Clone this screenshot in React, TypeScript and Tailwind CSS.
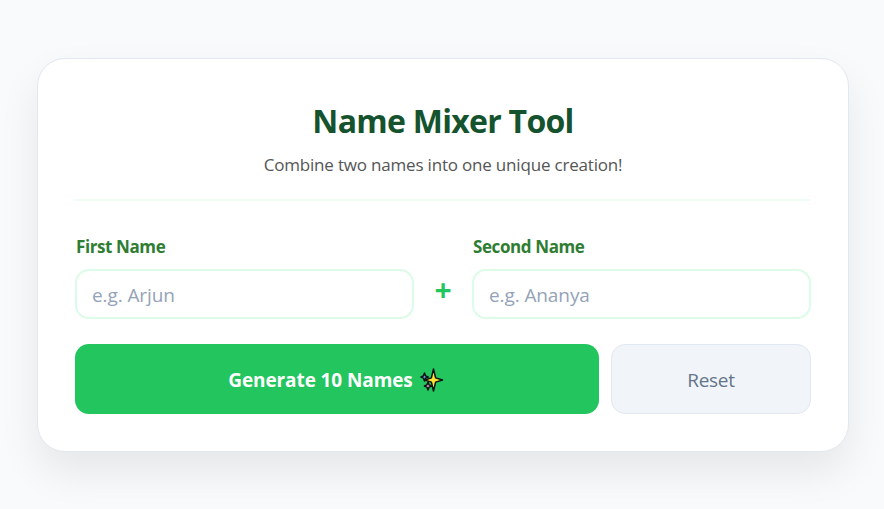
export default function App() {
  return (
    <div className="min-h-[509px] h-[509px] overflow-hidden bg-[#f8fafc] flex pl-[37px] pt-[58px] font-['Open_Sans',sans-serif]">
      <div className="w-[812px] h-[394px] bg-white border border-[#e2e8f0] rounded-[28px] px-[37px] pt-[40px] shadow-[0_20px_40px_rgba(0,0,0,0.08)]">
        <div className="border-b-2 border-[#f0fdf4] h-[102px] text-center">
          <h1 className="text-[32px] leading-[44px] font-bold text-[#14532d] tracking-[-0.72px]">Name Mixer Tool</h1>
          <p className="mt-[10px] text-[17px] leading-[24px] text-[#555555] tracking-[-0.19px]">Combine two names into one unique creation!</p>
        </div>

        <div className="flex items-end mt-[34px]">
          <div className="w-[339px]">
            <label className="block text-[17px] leading-[24px] font-bold text-[#2e7d32] mb-[10px] pl-px tracking-[-0.4px]">First Name</label>
            <input
              placeholder="e.g. Arjun"
              className="w-full h-[50px] pl-[15px] pr-[15px] pt-[2px] rounded-[14px] border-2 border-[#dcfce7] bg-white text-[19px] tracking-[-0.1px] outline-none placeholder:text-[#94a3b8]"
            />
          </div>
          <div className="w-[58px] h-[50px] flex items-center justify-center text-[#22c55e] text-[30px] font-bold leading-none pb-[8px]">+</div>
          <div className="w-[339px]">
            <label className="block text-[17px] leading-[24px] font-bold text-[#2e7d32] mb-[10px] pl-px tracking-[-0.4px]">Second Name</label>
            <input
              placeholder="e.g. Ananya"
              className="w-full h-[50px] pl-[15px] pr-[15px] pt-[2px] rounded-[14px] border-2 border-[#dcfce7] bg-white text-[19px] tracking-[-0.1px] outline-none placeholder:text-[#94a3b8]"
            />
          </div>
        </div>

        <div className="flex gap-[12px] mt-[25px]">
          <button className="w-[524px] h-[70px] pt-[2px] pr-[2px] rounded-[14px] bg-[#22c55e] text-white text-[19px] font-bold tracking-[-0.1px] flex items-center justify-center gap-[7px]">
            Generate 10 Names
            <svg width="24" height="24" viewBox="0 0 24 24">
              <path d="M4.5 5 L5.6 7.9 L8.2 9 L5.6 10.1 L4.5 13 L3.4 10.1 L1 9 L3.4 7.9Z" fill="#60a5fa" stroke="#111" strokeWidth="1.5" strokeLinejoin="round" />
              <path d="M8 14 L9.1 16.9 L11.7 18 L9.1 19.1 L8 22 L6.9 19.1 L4.4 18 L6.9 16.9Z" fill="#f0a0d0" stroke="#111" strokeWidth="1.5" strokeLinejoin="round" />
              <path d="M13.5 1 L15.6 9.9 L22.5 12 L15.6 14.1 L13.5 23 L11.4 14.1 L5 12 L11.4 9.9Z" fill="#ffe234" stroke="#111" strokeWidth="1.5" strokeLinejoin="round" />
            </svg>
          </button>
          <button className="w-[200px] h-[70px] pt-[2px] rounded-[14px] bg-[#f1f5f9] border border-[#e2e8f0] text-[#64748b] text-[19px] tracking-[-0.3px]">Reset</button>
        </div>
      </div>
    </div>
  );
}
